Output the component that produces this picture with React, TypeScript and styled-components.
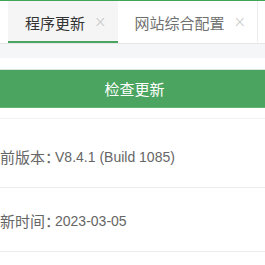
import React from "react";
import styled, { createGlobalStyle } from "styled-components";

const Global = createGlobalStyle`
  html, body { margin: 0; padding: 0; background: #fff; overflow: hidden; }
  body { font-family: "Liberation Sans", "Noto Sans CJK SC", sans-serif; }
`;

const Page = styled.div`
  width: 265px;
  height: 265px;
  overflow: hidden;
  background: #fff;
`;

const TabBar = styled.div`
  display: flex;
  height: 42px;
  padding-left: 8px;
  border-top: 1px solid #3ea55a;
  border-bottom: 1px solid #e6e6e6;
  background: #fff;
`;

const Tab = styled.div<{ $active?: boolean }>`
  display: flex;
  align-items: center;
  flex: none;
  padding: 2px 11px 0 17px;
  box-sizing: border-box;
  height: 42px;
  background: ${(p) => (p.$active ? "#f5f5f5" : "#fff")};
  border-bottom: 2px solid ${(p) => (p.$active ? "#4ba560" : "transparent")};
  border-right: ${(p) => (p.$active ? "none" : "1px solid #ececec")};
  font-family: "Noto Sans CJK SC", sans-serif;
  font-size: 15px;
  color: ${(p) => (p.$active ? "#333" : "#707070")};
`;

const Close = styled.span`
  margin-left: 9px;
  color: #c4c4c4;
  font-family: "DejaVu Sans", sans-serif;
  font-size: 15px;
  font-weight: 300;
  line-height: 1;
`;

const Stripe = styled.div`
  height: 14px;
  background: #f5f6f7;
`;

const Content = styled.div`
  margin: 0 -19px 0 -15px;
`;

const ButtonArea = styled.div`
  padding: 11px 0 10px;
  border-bottom: 1px solid #f2f2f2;
`;

const CheckButton = styled.button`
  display: block;
  width: 100%;
  height: 39px;
  border: none;
  border-top: 1px solid #d8e8dc;
  border-bottom: 1px solid #63b577;
  background: #4ba560;
  color: #fff;
  font-family: "Noto Sans CJK SC", sans-serif;
  font-size: 15px;
  padding: 0;
`;

const List = styled.div`
  margin-top: 5px;
`;

const Row = styled.div`
  display: flex;
  align-items: center;
  height: 64px;
  box-sizing: border-box;
  border-bottom: 1px solid #ececec;
  color: #666;
  padding-top: 2px;
`;

const Label = styled.span`
  font-family: "Noto Sans CJK SC", sans-serif;
  font-size: 15px;
  margin-right: -5px;
`;

const Value = styled.span`
  font-family: "Liberation Sans", sans-serif;
  font-size: 14px;
`;

export default function App() {
  return (
    <Page>
      <Global />
      <TabBar>
        <Tab $active>
          程序更新<Close>×</Close>
        </Tab>
        <Tab>
          网站综合配置<Close>×</Close>
        </Tab>
      </TabBar>
      <Stripe />
      <Content>
        <ButtonArea>
          <CheckButton>检查更新</CheckButton>
        </ButtonArea>
        <List>
          <Row>
            <Label>当前版本：</Label>
            <Value>V8.4.1 (Build 1085)</Value>
          </Row>
          <Row>
            <Label>更新时间：</Label>
            <Value>2023-03-05</Value>
          </Row>
        </List>
      </Content>
    </Page>
  );
}
